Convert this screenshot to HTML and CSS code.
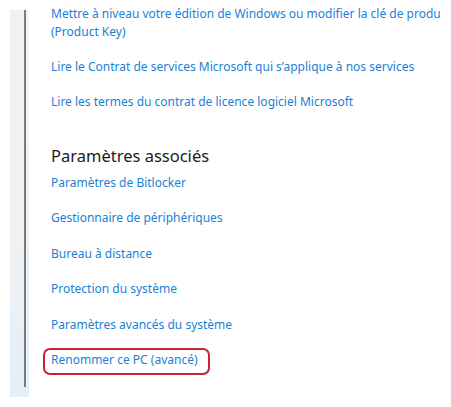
FILE: index.html
```html
<!DOCTYPE html>
<html lang="fr">
<head>
<meta charset="utf-8">
<title>Paramètres associés</title>
<link rel="stylesheet" href="styles.css">
</head>
<body>
<div class="page">
  <div class="rail"><div class="rail-line"></div></div>
  <div class="content">
    <ul class="links links-top">
      <li><a class="link" href="#">Mettre à niveau votre édition de Windows ou modifier la clé de produit<br>(Product Key)</a></li>
      <li><a class="link" href="#">Lire le Contrat de services Microsoft qui s’applique à nos services</a></li>
      <li><a class="link" href="#">Lire les termes du contrat de licence logiciel Microsoft</a></li>
    </ul>
    <h2 class="heading">Paramètres associés</h2>
    <ul class="links links-related">
      <li><a class="link" href="#">Paramètres de Bitlocker</a></li>
      <li><a class="link" href="#">Gestionnaire de périphériques</a></li>
      <li><a class="link" href="#">Bureau à distance</a></li>
      <li><a class="link" href="#">Protection du système</a></li>
      <li><a class="link" href="#">Paramètres avancés du système</a></li>
      <li class="marked"><a class="link" href="#">Renommer ce PC (avancé)</a></li>
    </ul>
  </div>
</div>
</body>
</html>
```

FILE: styles.css
```css
html, body {
  margin: 0;
  padding: 0;
  background: #ffffff;
}

body {
  font-family: "Segoe UI", "Noto Sans", "Open Sans", sans-serif;
  width: 451px;
  height: 407px;
  overflow: hidden;
}

.page {
  display: flex;
  align-items: flex-start;
}

.rail {
  margin-top: 10px;
  margin-left: 10px;
  width: 19px;
  height: 387px;
  background: linear-gradient(to bottom, #f2f2f3 0%, #eff1f3 60%, #e3eff9 100%);
  display: flex;
}

.rail-line {
  margin-left: 14px;
  width: 2px;
  height: 377px;
  background: #7b7b7b;
}

.content {
  margin-left: 22px;
  width: 392px;
  padding-top: 5px;
}

.links {
  list-style: none;
  margin: 0;
  padding: 0;
  display: flex;
  flex-direction: column;
  gap: 17px;
  font-size: 12px;
  line-height: 18px;
  white-space: nowrap;
}

.links-top {
  width: 390px;
  overflow: hidden;
}

.links-related {
  gap: 17.4px;
}

.link {
  color: #1a7fd6;
  text-decoration: none;
}

.heading {
  margin: 33px 0 6px 0;
  font-size: 16.5px;
  line-height: 24px;
  font-weight: 400;
  color: #1b1b1b;
}

.marked {
  position: relative;
}

.marked::before {
  content: "";
  position: absolute;
  left: -8px;
  top: -3px;
  width: 167px;
  height: 27px;
  box-sizing: border-box;
  border: 2px solid #c9232d;
  border-radius: 7px;
}
```
